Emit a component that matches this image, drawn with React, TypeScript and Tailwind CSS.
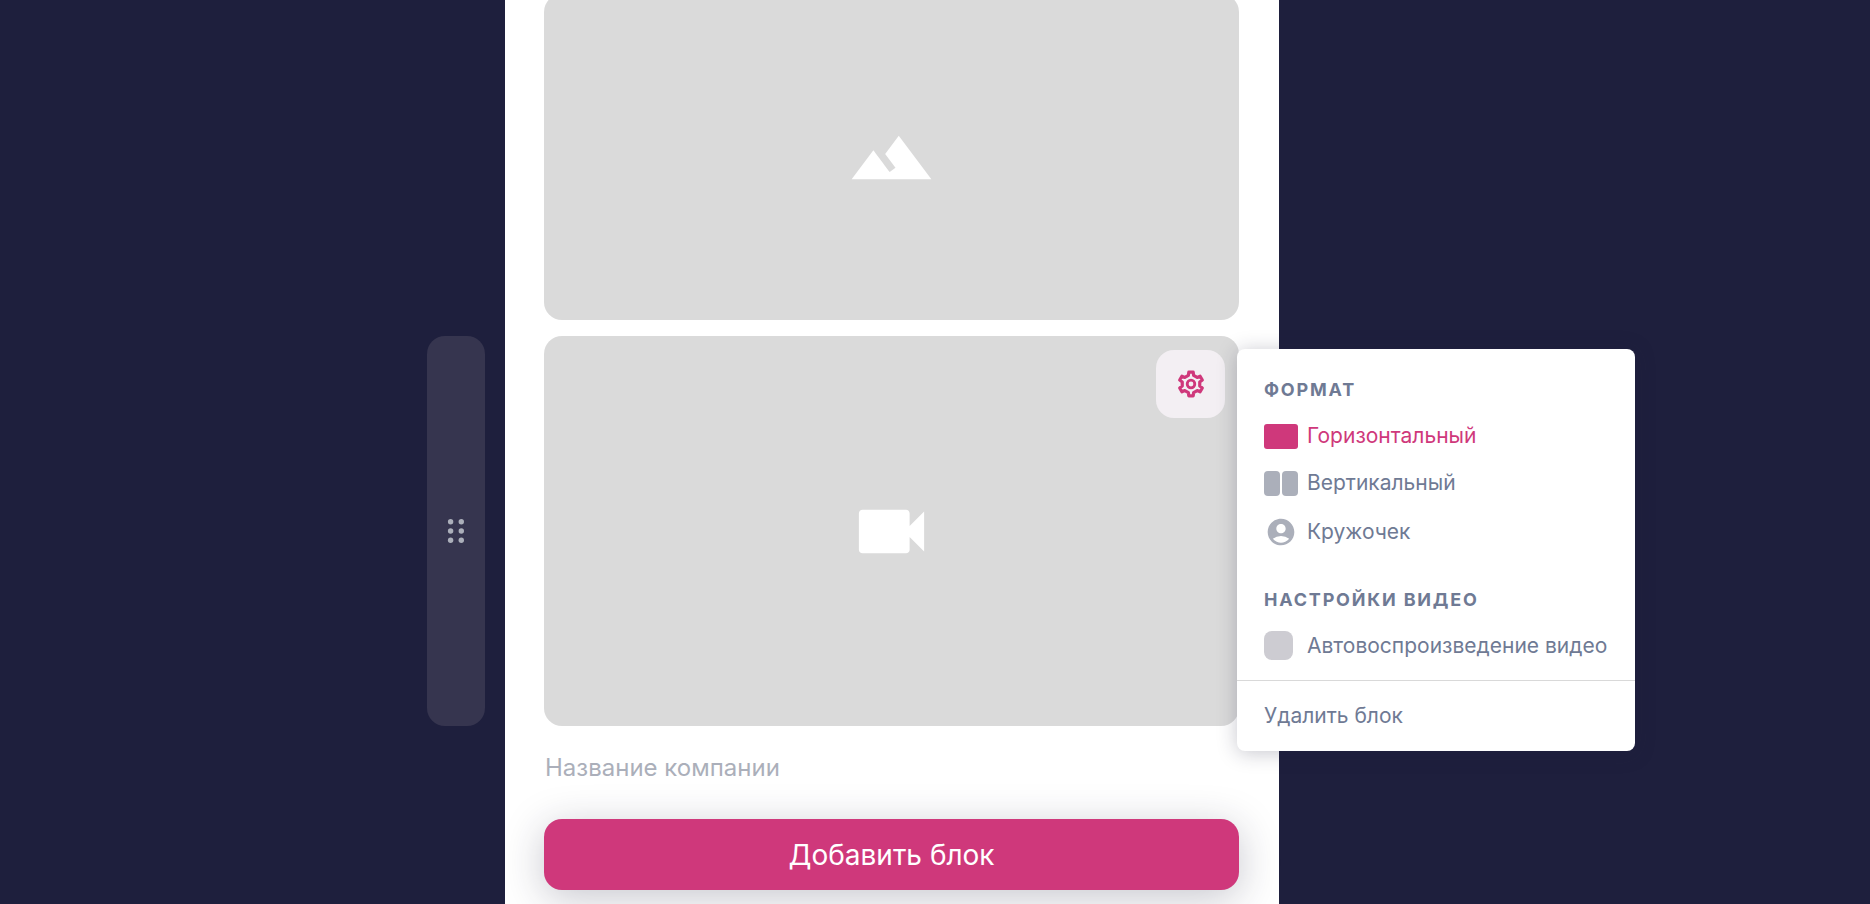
import type { ReactNode } from 'react'
import clsx from 'clsx'
import { MdAccountCircle, MdFilterHdr, MdVideocam } from 'react-icons/md'

type Format = {
  id: string
  label: string
  icon: ReactNode
}

const FORMATS: Format[] = [
  {
    id: 'horizontal',
    label: 'Горизонтальный',
    icon: <span className="h-[25px] w-[34px] rounded-[3px] bg-[#cf387b]" />,
  },
  {
    id: 'vertical',
    label: 'Вертикальный',
    icon: (
      <span className="flex h-[25px] w-[34px] gap-[2px]">
        <span className="flex-1 rounded-[4px] bg-[#abafba]" />
        <span className="flex-1 rounded-[4px] bg-[#abafba]" />
      </span>
    ),
  },
  {
    id: 'circle',
    label: 'Кружочек',
    icon: <MdAccountCircle size={32} className="text-[#abafba]" />,
  },
]

function GearIcon() {
  return (
    <svg width="28" height="28" viewBox="-14 -14 28 28" fill="none" stroke="currentColor" strokeLinejoin="round">
      <path
        strokeWidth="3.2"
        d="M-2.6-8.6L-2.2-11.8H2.2L2.6-8.6L6.15-6.55L9.12-7.81L11.32-3.99L8.75-2.05V2.05L11.32 3.99L9.12 7.81L6.15 6.55L2.6 8.6L2.2 11.8H-2.2L-2.6 8.6L-6.15 6.55L-9.12 7.81L-11.32 3.99L-8.75 2.05V-2.05L-11.32-3.99L-9.12-7.81L-6.15-6.55Z"
      />
      <circle r="3.8" strokeWidth="2.8" />
    </svg>
  )
}

function DragHandle() {
  return (
    <button
      type="button"
      aria-label="Переместить блок"
      className="absolute inset-y-0 -left-[117px] flex w-[58px] items-center justify-center rounded-[18px] bg-[#36354f]"
    >
      <svg width="18" height="26" viewBox="0 0 18 26" fill="#abafba">
        {[3.7, 13, 22.3].map((y) => (
          <g key={y}>
            <circle cx="3.6" cy={y} r="2.7" />
            <circle cx="14.3" cy={y} r="2.7" />
          </g>
        ))}
      </svg>
    </button>
  )
}

function MenuTitle({ children }: { children: ReactNode }) {
  return <h2 className="text-[18px] leading-6 font-bold tracking-widest uppercase">{children}</h2>
}

function SettingsMenu() {
  return (
    <div className="absolute top-[13px] left-full z-10 -ml-[2px] min-w-[398px] rounded-lg bg-white text-[21px] leading-7 whitespace-nowrap text-[#6f7a94] shadow-[0_2px_20px_rgba(30,31,61,0.25)]">
      <div className="px-[27px] pt-[29px] pb-5">
        <MenuTitle>Формат</MenuTitle>
        <div className="mt-5 flex flex-col gap-[19px]">
          {FORMATS.map((format, i) => (
            <label
              key={format.id}
              className={clsx('flex items-center gap-[9px]', i === 0 && 'text-[#cf387b]')}
            >
              <input type="radio" name="format" defaultChecked={i === 0} className="sr-only" />
              <span className="flex w-[34px] justify-center">{format.icon}</span>
              {format.label}
            </label>
          ))}
        </div>

        <div className="mt-10">
          <MenuTitle>Настройки видео</MenuTitle>
        </div>
        <label className="mt-[19px] flex items-center gap-[14px]">
          <input
            type="checkbox"
            className="size-[29px] appearance-none rounded-lg bg-[#cdccd2] checked:bg-[#cf387b]"
          />
          Автовоспроизведение видео
        </label>
      </div>
      <button
        type="button"
        className="h-[71px] w-full border-t border-[#d9d9d9] px-[27px] text-left"
      >
        Удалить блок
      </button>
    </div>
  )
}

export default function App() {
  return (
    <div className="flex h-screen justify-center overflow-hidden bg-[#1e1f3d] pr-[86px] font-['Inter',sans-serif]">
      <main className="w-[774px] bg-white pr-10 pl-[39px]">
        <div className="-mt-[6px] flex h-[326px] items-center justify-center rounded-[18px] bg-[#dadada] text-white">
          <MdFilterHdr size={87} />
        </div>

        <div className="relative mt-4 flex h-[390px] items-center justify-center rounded-[18px] bg-[#dadada] text-white">
          <DragHandle />
          <MdVideocam size={87} />
          <button
            type="button"
            aria-label="Настройки блока"
            className="absolute top-[14px] right-[14px] flex h-[68px] w-[69px] items-center justify-center rounded-[18px] bg-[#f3eff3] text-[#cf387b]"
          >
            <GearIcon />
          </button>
          <SettingsMenu />
        </div>

        <input
          type="text"
          aria-label="Название компании"
          placeholder="Название компании"
          className="mt-[13px] block h-14 w-full px-px text-[24px] outline-none placeholder:text-[#abafba]"
        />
        <button
          type="button"
          className="mt-6 h-[71px] w-full rounded-[18px] bg-[#cf387b] text-[28px] text-white shadow-[0_8px_40px_rgba(30,31,61,0.25)]"
        >
          Добавить блок
        </button>
      </main>
    </div>
  )
}
